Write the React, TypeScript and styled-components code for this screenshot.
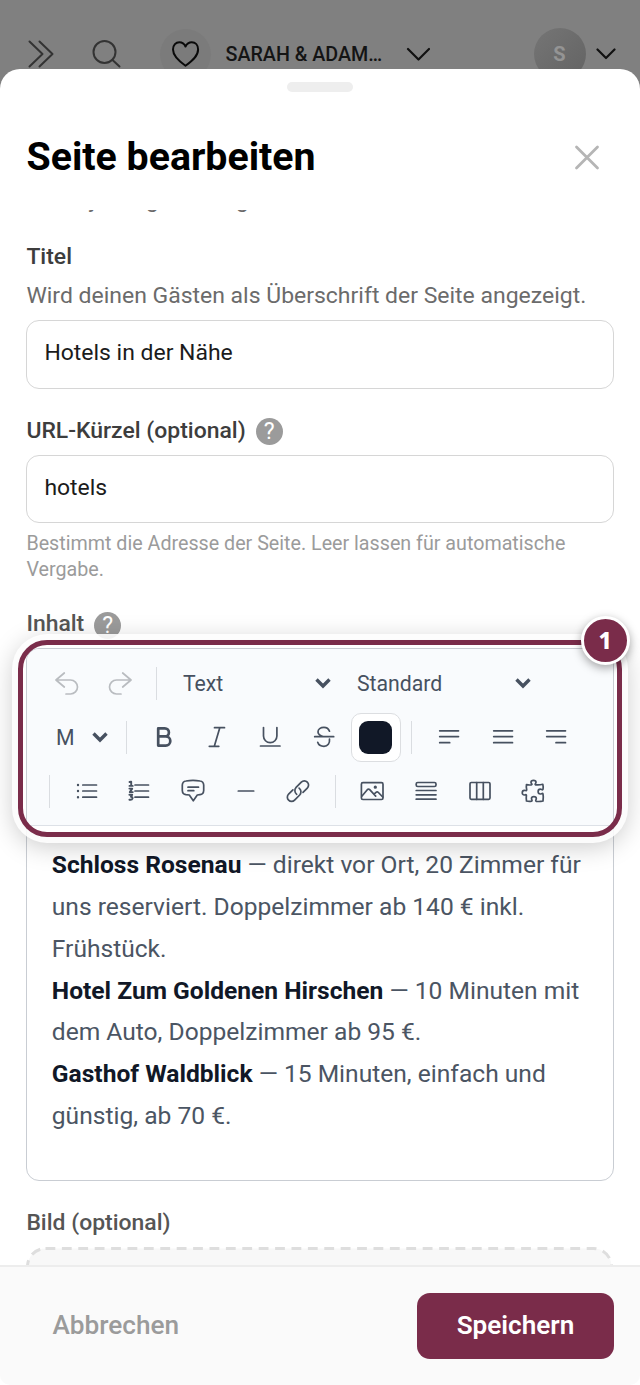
import React from "react";
import styled, { createGlobalStyle } from "styled-components";

const Global = createGlobalStyle`
  * { box-sizing: border-box; }
  body { margin: 0; font-family: Roboto, "Liberation Sans", sans-serif; background: #808080; }
  h1, p { margin: 0; }
`;

const Page = styled.div`
  display: flex;
  flex-direction: column;
  width: 640px;
  height: 1385px;
  overflow: hidden;
  background: linear-gradient(#808080 0 1200px, #fff 1200px);
`;

const TopBar = styled.header`
  display: flex;
  align-items: center;
  flex: none;
  height: 69px;
  padding: 39px 24px 0 26px;
`;

const BarIcon = styled.svg<{ $w: number; $ml?: number; $stroke?: number }>`
  flex: none;
  width: ${(p) => p.$w}px;
  height: 30px;
  margin-left: ${(p) => p.$ml ?? 0}px;
  fill: none;
  stroke: ${(p) => p.color ?? "#111"};
  stroke-width: ${(p) => p.$stroke ?? 2};
  stroke-linecap: round;
  stroke-linejoin: round;
`;

const Round = styled.div<{ $ml: number; $bg: string; $size: number }>`
  display: flex;
  align-items: center;
  justify-content: center;
  flex: none;
  width: ${(p) => p.$size}px;
  height: ${(p) => p.$size}px;
  margin-left: ${(p) => p.$ml}px;
  border-radius: 50%;
  background: ${(p) => p.$bg};
  color: #949494;
  font-size: 20px;
  font-weight: 700;
`;

const EventName = styled.div`
  flex: none;
  width: 160px;
  margin-left: 14.5px;
  font-size: 19.7px;
  font-weight: 500;
  color: #141414;
  white-space: nowrap;
`;

const Sheet = styled.main`
  position: relative;
  display: flex;
  flex-direction: column;
  flex: none;
  height: 1316px;
  border-radius: 20px 20px 10px 10px;
  background: #fff;
  overflow: hidden;
`;

const Handle = styled.div`
  flex: none;
  align-self: center;
  width: 66px;
  height: 10px;
  margin-top: 13px;
  border-radius: 5px;
  background: #eee;
`;

const SheetHead = styled.div`
  display: flex;
  align-items: center;
  justify-content: space-between;
  flex: none;
  height: 118px;
  padding: 12px 39px 0 26.5px;
`;

const Heading = styled.h1`
  font-size: 39.3px;
  line-height: 48px;
  font-weight: 700;
  color: #000;
  white-space: nowrap;
`;

const Body = styled.section`
  display: flex;
  flex-direction: column;
  flex: 1;
  min-height: 0;
  padding: 0 26.4px;
  overflow: hidden;
`;

const Hint = styled.p<{ $mt?: number }>`
  flex: none;
  margin-top: ${(p) => p.$mt ?? 0}px;
  font-size: 22.97px;
  line-height: 34px;
  color: #6b6b6b;
  white-space: nowrap;
`;

const Label = styled.div<{ $mt: number; $color?: string }>`
  display: flex;
  align-items: center;
  flex: none;
  gap: 10px;
  height: 32px;
  margin-top: ${(p) => p.$mt}px;
  font-size: 22.95px;
  font-weight: 500;
  color: ${(p) => p.$color ?? "#3d3d3d"};
  white-space: nowrap;
`;

const HelpDot = styled.span`
  display: flex;
  align-items: center;
  justify-content: center;
  width: 27px;
  height: 27px;
  margin-top: 3px;
  border-radius: 50%;
  background: #9b9b9b;
  color: #fff;
  font-size: 23px;
  font-weight: 400;
`;

const Field = styled.div<{ $mt: number }>`
  display: flex;
  align-items: center;
  flex: none;
  height: 68.5px;
  margin-top: ${(p) => p.$mt}px;
  padding: 0 17px 2.6px;
  border: 1px solid #d6d6d6;
  border-radius: 13px;
  font-size: 22.95px;
  color: #1b1b1b;
`;

const Note = styled.p`
  flex: none;
  margin-top: 7.5px;
  font-size: 19.69px;
  line-height: 26px;
  color: #9b9b9b;
`;

const Editor = styled.div`
  position: relative;
  flex: none;
  height: 533.5px;
  margin-top: 8px;
  border: 1px solid #c9cdd3;
  border-radius: 13px;
`;

const Toolbar = styled.div`
  display: flex;
  flex-direction: column;
  height: 177px;
  padding-top: 8px;
  border-bottom: 1px solid #dde1e7;
  border-radius: 12px 12px 0 0;
  background: #f9fbfd;
  color: #475160;
`;

const ToolRow = styled.div<{ $pl: number }>`
  display: flex;
  align-items: center;
  height: 53.9px;
  padding-left: ${(p) => p.$pl}px;
`;

const Tool = styled.div<{ $w?: number; $dim?: boolean }>`
  display: flex;
  align-items: center;
  justify-content: center;
  flex: none;
  width: ${(p) => p.$w ?? 53}px;
  color: ${(p) => (p.$dim ? "#b9bcc0" : "inherit")};

  svg {
    width: 30px;
    height: 30px;
    fill: none;
    stroke: currentColor;
    stroke-width: 1.7;
    stroke-linecap: round;
    stroke-linejoin: round;
  }
`;

const Divider = styled.div<{ $ml?: number; $mr?: number }>`
  flex: none;
  width: 1px;
  height: 33px;
  margin-left: ${(p) => p.$ml ?? 0}px;
  margin-right: ${(p) => (p.$mr ?? 0) + 0.5}px;
  background: #dadde1;
`;

const Select = styled.div<{ $w: number; $ml: number }>`
  display: flex;
  align-items: center;
  justify-content: space-between;
  flex: none;
  width: ${(p) => p.$w}px;
  margin-left: ${(p) => p.$ml}px;
  font-size: 21.25px;

  svg {
    width: 16px;
    height: 12px;
    fill: none;
    stroke: #475160;
    stroke-width: 3.4;
  }
`;

const SwatchButton = styled.div`
  display: flex;
  align-items: center;
  justify-content: center;
  flex: none;
  width: 50px;
  height: 49px;
  margin-left: 1px;
  border: 1px solid #dcdee1;
  border-radius: 10px;
  background: #fff;
`;

const Swatch = styled.div`
  width: 33px;
  height: 33px;
  border-radius: 9px;
  background: #111827;
`;

const Content = styled.div`
  padding: 18.7px 24.4px;
  font-size: 24.58px;
  line-height: 41.8px;
  color: #4b5563;

  p { white-space: nowrap; }
  strong { font-weight: 700; color: #111827; }
`;

const Highlight = styled.div`
  position: absolute;
  left: -9.4px;
  top: -9px;
  width: 604px;
  height: 197px;
  border: 5px solid #7a2c4a;
  border-radius: 29px;
  box-shadow: 0 0 0 6px rgba(255, 255, 255, 0.88), 0 5px 26px 4px rgba(0, 0, 0, 0.22);
`;

const Badge = styled.div`
  position: absolute;
  right: -17px;
  top: -33px;
  display: flex;
  align-items: center;
  justify-content: center;
  width: 49px;
  height: 49px;
  border: 3px solid #fff;
  border-radius: 50%;
  background: #7a2c4a;
  box-shadow: 0 3px 10px rgba(0, 0, 0, 0.35);
  color: #fff;
  font-family: "Noto Sans", sans-serif;
  font-size: 23px;
  font-weight: 800;
`;

const DropZone = styled.svg`
  flex: none;
  width: 587px;
  height: 80px;
  margin-top: 8px;
`;

const Footer = styled.footer`
  display: flex;
  align-items: center;
  justify-content: space-between;
  flex: none;
  height: 120px;
  padding: 0 26px 0 52.5px;
  border-top: 2px solid #ededed;
  background: #fafafa;
`;

const Cancel = styled.div`
  padding-bottom: 2px;
  font-size: 26.2px;
  font-weight: 500;
  color: #9b9b9b;
`;

const Save = styled.div`
  display: flex;
  align-items: center;
  justify-content: center;
  width: 197px;
  height: 66px;
  padding-bottom: 2px;
  border-radius: 13px;
  background: #7a2c4a;
  color: #fff;
  font-size: 26.1px;
  font-weight: 600;
`;

const icons: Record<string, React.ReactNode> = {
  undo: <path d="M12.3 5L4 12l8.3 7M4 12H18.5a7 7 0 0 1 0 14H14" />,
  redo: <path d="M17.7 5L26 12l-8.3 7M26 12H11.5a7 7 0 0 0 0 14H16" />,
  bold: <path style={{ strokeWidth: 2.7 }} d="M9.2 6.400v17.200h7.500a4.600 4.600 0 0 0 0-9.200H9.200h6.700a4 4 0 0 0 0-8z" />,
  italic: <path d="M12.500 5.700h10M7.300 24.300h9.500M17.800 5.700l-5.500 18.600" />,
  underline: <path d="M8.500 5.500v8.500a6.700 6.700 0 0 0 13.400 0V5.500M5.500 24H25" />,
  strike: <path d="M5.700 14.700H24.700M20.500 9.200C19.500 6.500 17.500 5.300 15 5.300c-3.500 0-6 1.900-6 4.600 0 2.500 2.200 3.800 6 4.800M20.500 17.200c.5 4.200-1.800 7.100-5.500 7.100-3.400 0-5.500-1.400-6.300-4" />,
  left: <path d="M5.700 8.800H24.500M5.700 14.600H24.500M5.700 20.700H15.700" />,
  center: <path d="M5.700 8.800H24.500M5.700 14.600H24.500M5.700 20.700H24.500" />,
  right: <path d="M5.700 8.800H24.500M5.700 14.600H24.500M15 20.700H24.500" />,
  bullets: (
    <>
      <path d="M10.800 9H24.500M10.800 15H24.500M10.800 21.200H24.500" />
      <path style={{ strokeWidth: 2.4 }} d="M6 9h.01M6 15h.01M6 21.200h.01" />
    </>
  ),
  numbers: (
    <>
      <path d="M11 9H24.500M11 15H24.500M11 21.200H24.500" />
      <path style={{ strokeWidth: 1.9 }} d="M5.500 6l1.700-.4v4.200M5.500 9.900h3.200M5.400 12.600h2.800l-2.400 3.500h3M5.400 18.800h2.800l-1.300 2c2.700 0 2.200 3.500-1.500 2.900" />
    </>
  ),
  comment: <path d="M8 5Q15 3.800 22 5Q25.500 5.500 25.700 9V14.500Q25.500 18.300 22 18.700L19.300 19 15.300 24.800 11.300 19 8 18.700Q4.500 18.300 4.300 14.500V9Q4.500 5.500 8 5zM10 11.200h10.500M10 14.700h5.800" />,
  minus: <path d="M7.300 15h15.400" />,
  link: <path d="M13.700 18.300a4.700 4.700 0 0 1-.6-6.900l5.200-5.300a4.200 4.200 0 0 1 6 0 4.200 4.200 0 0 1 0 6l-4.300 4.300M16.100 12.100a4.700 4.700 0 0 1 .6 6.900l-5.100 5.200a4.200 4.200 0 0 1-6 0 4.200 4.200 0 0 1 0-6l4.300-4.300" />,
  image: (
    <>
      <rect x="4.400" y="6.700" width="21.600" height="16.800" rx="1.500" />
      <path d="M4.800 20.300l5.500-6.600q1.200-1.300 2.400 0l6 6.400M16.800 18.300l2.200-2q1.200-1 2.400.2l4.300 4.500" />
      <circle cx="18.300" cy="11.200" r=".8" />
    </>
  ),
  block: (
    <>
      <rect x="5.200" y="6.500" width="19.800" height="4" rx="1.500" />
      <path d="M5.200 14.500H25M5.200 18.800H25M5.200 23.200H25" />
    </>
  ),
  columns: (
    <>
      <rect x="5" y="6.500" width="20" height="16.800" rx="1.300" />
      <path d="M11.700 6.500v16.800M18.300 6.500v16.800" />
    </>
  ),
  puzzle: (
    <path d="M8.500 8.500Q11 9.300 13.500 8.800C14.800 8.400 13 7.500 13 6.200C13 3.800 18 3.800 18 6.200C18 7.500 16.500 8.300 17.500 8.800Q21 9.300 24.800 8.300Q25.500 11 25 13.300C24.600 14.500 23.500 13.200 22.300 13.200C19.400 13.200 19.400 18 22.300 18C23.500 18 24.600 16.800 25 18Q25.600 21 25 25Q21.500 25.800 18.300 25.300C17 25 18.300 23.700 18.300 22.500C18.300 20 13.500 20 13.500 22.500C13.500 23.700 14.700 24.800 13.500 25.200Q11 25.700 8.500 25Q8 22 8.400 19.500C8.400 18 7.500 19 6.300 19C3.600 19 3.600 14.300 6.300 14.300C7.500 14.300 8.700 15.300 8.700 13.800Q8 11 8.500 8.500z" />
  ),
};

const Icon = ({ name }: { name: string }) => <svg viewBox="0 0 30 30">{icons[name]}</svg>;

const Caret = () => (
  <svg viewBox="0 0 16 12">
    <path d="M1.500 2.500L8 9l6.500-6.500" />
  </svg>
);

export default function App() {
  return (
    <Page>
      <Global />
      <TopBar>
        <BarIcon $w={30} color="#333">
          <path d="M3.500 2.500L16.500 15 3.500 27.500M13.500 2.500L26.500 15 13.500 27.500" />
        </BarIcon>
        <BarIcon $w={30} $ml={36} color="#333">
          <circle cx="12.500" cy="13" r="11" />
          <path d="M20.500 21l7 6.500" />
        </BarIcon>
        <Round $ml={38} $bg="#7b7b7b" $size={51}>
          <BarIcon $w={30} color="#0a0a0a">
            <path d="M14.500 26.700C8.500 22.500 2 17.500 2 10.500c0-4.500 3-7.300 6.300-7.300 2.800 0 5 1.500 6.200 4.300 1.300-2.800 3.500-4.300 6.300-4.300 3.500 0 6.300 2.800 6.300 7.300C27.100 17.500 20.500 22.500 14.500 26.700z" />
          </BarIcon>
        </Round>
        <EventName>SARAH &amp; ADAM…</EventName>
        <BarIcon $w={24} $ml={20.500} color="#111" $stroke={2.2}>
          <path d="M2 10l10.500 10.500L23 10" />
        </BarIcon>
        <Round $ml={103.500} $bg="linear-gradient(135deg, #757575, #636363)" $size={52}>S</Round>
        <BarIcon $w={20} $ml={10} color="#111" $stroke={2.2}>
          <path d="M1.500 10.500l8.500 8.500 8.500-8.500" />
        </BarIcon>
      </TopBar>
      <Sheet>
        <Handle />
        <SheetHead>
          <Heading>Seite bearbeiten</Heading>
          <BarIcon $w={28} color="#b5b5b5" $stroke={2.8}>
            <path d="M3.500 5l21 21M24.500 5l-21 21" />
          </BarIcon>
        </SheetHead>
        <Body>
          <Hint $mt={-27}>Wenn jeder gern auf gibt</Hint>
          <Label $mt={23}>Titel</Label>
          <Hint $mt={7}>Wird deinen Gästen als Überschrift der Seite angezeigt.</Hint>
          <Field $mt={7}>Hotels in der Nähe</Field>
          <Label $mt={25.5}>
            URL-Kürzel (optional)
            <HelpDot>?</HelpDot>
          </Label>
          <Field $mt={8.5}>hotels</Field>
          <Note>Bestimmt die Adresse der Seite. Leer lassen für automatische Vergabe.</Note>
          <Label $mt={25} $color="#555">
            Inhalt
            <HelpDot>?</HelpDot>
          </Label>
          <Editor>
            <Toolbar>
              <ToolRow $pl={12.5}>
                <Tool $w={53.5} $dim><Icon name="undo" /></Tool>
                <Tool $w={53.5} $dim><Icon name="redo" /></Tool>
                <Divider $ml={9} />
                <Select $w={148} $ml={25.5}>Text<Caret /></Select>
                <Select $w={174.5} $ml={26}>Standard<Caret /></Select>
              </ToolRow>
              <ToolRow $pl={0.5}>
                <Select $w={52.5} $ml={28}>M<Caret /></Select>
                <Divider $ml={18} $mr={9.5} />
                <Tool><Icon name="bold" /></Tool>
                <Tool><Icon name="italic" /></Tool>
                <Tool $w={54}><Icon name="underline" /></Tool>
                <Tool $w={52.5}><Icon name="strike" /></Tool>
                <SwatchButton><Swatch /></SwatchButton>
                <Divider $ml={10.500} $mr={9.500} />
                <Tool $w={54}><Icon name="left" /></Tool>
                <Tool $w={54}><Icon name="center" /></Tool>
                <Tool $w={52}><Icon name="right" /></Tool>
              </ToolRow>
              <ToolRow $pl={22}>
                <Divider $mr={9.5} />
                <Tool $w={52.5}><Icon name="bullets" /></Tool>
                <Tool $w={53}><Icon name="numbers" /></Tool>
                <Tool $w={54}><Icon name="comment" /></Tool>
                <Tool $w={52}><Icon name="minus" /></Tool>
                <Tool><Icon name="link" /></Tool>
                <Divider $ml={10} $mr={9} />
                <Tool $w={54}><Icon name="image" /></Tool>
                <Tool $w={53.5}><Icon name="block" /></Tool>
                <Tool $w={53.5}><Icon name="columns" /></Tool>
                <Tool><Icon name="puzzle" /></Tool>
              </ToolRow>
            </Toolbar>
            <Content>
              <p><strong>Schloss Rosenau</strong> — direkt vor Ort, 20 Zimmer für</p>
              <p>uns reserviert. Doppelzimmer ab 140 € inkl.</p>
              <p>Frühstück.</p>
              <p><strong>Hotel Zum Goldenen Hirschen</strong> — 10 Minuten mit</p>
              <p>dem Auto, Doppelzimmer ab 95 €.</p>
              <p><strong>Gasthof Waldblick</strong> — 15 Minuten, einfach und</p>
              <p>günstig, ab 70 €.</p>
            </Content>
            <Highlight />
            <Badge>1</Badge>
          </Editor>
          <Label $mt={25.5} $color="#555">Bild (optional)</Label>
          <DropZone viewBox="0 0 587 80">
            <rect x="1.500" y="1.500" width="584" height="120" rx="18" fill="#f8f8f8" stroke="#dedede" strokeWidth="3" strokeDasharray="9.800 6.600" />
          </DropZone>
        </Body>
        <Footer>
          <Cancel>Abbrechen</Cancel>
          <Save>Speichern</Save>
        </Footer>
      </Sheet>
    </Page>
  );
}
